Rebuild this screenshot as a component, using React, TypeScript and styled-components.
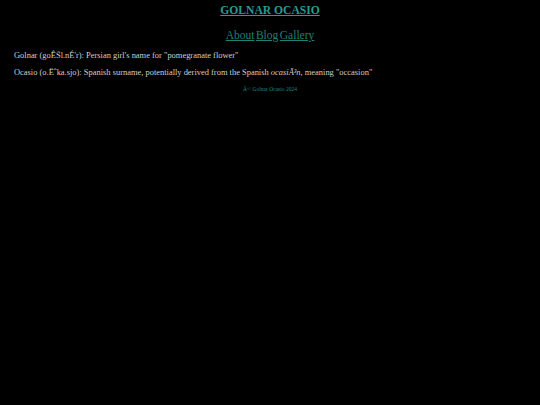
import React from 'react'
import styled, { createGlobalStyle } from 'styled-components'

const GlobalStyle = createGlobalStyle`
  html, body {
    margin: 0;
    padding: 0;
    background: #000;
    height: 100%;
  }
  body {
    font-family: "Liberation Serif", "Times New Roman", serif;
  }
`

const Page = styled.div`
  min-height: 405px;
  background: #000;
  padding: 4px 14px 0;
  box-sizing: border-box;
`

const Header = styled.header`
  display: flex;
  flex-direction: column;
  align-items: center;
`

const Title = styled.a`
  font-size: 11.6px;
  font-weight: bold;
  color: #2a9a8e;
  text-decoration: underline;
  line-height: 14px;
`

const Nav = styled.nav`
  display: flex;
  gap: 1.5px;
  margin-top: 10px;
`

const NavLink = styled.a`
  font-size: 11.5px;
  color: #1f8075;
  text-decoration: underline;
  line-height: 14px;
`

const Def = styled.p<{ $top: number }>`
  margin: 0;
  font-size: 8.45px;
  line-height: 10px;
  color: #cfcfcf;
  margin-top: ${(p) => p.$top}px;
`

const Term = styled.i`
  font-style: italic;
`

const Footer = styled.footer`
  text-align: center;
  font-size: 5.5px;
  color: #1f8a80;
  margin-top: 9px;
`

export default function App() {
  return (
    <Page>
      <GlobalStyle />
      <Header>
        <Title href="#">GOLNAR OCASIO</Title>
        <Nav>
          <NavLink href="#">About</NavLink>
          <NavLink href="#">Blog</NavLink>
          <NavLink href="#">Gallery</NavLink>
        </Nav>
      </Header>
      <Def $top={8}>Golnar (goÊŠl.nÉ'r): Persian girl's name for "pomegranate flower"</Def>
      <Def $top={7}>
        Ocasio (o.Ëˆka.sjo): Spanish surname, potentially derived from the Spanish <Term>ocasiÃ³n</Term>, meaning "occasion"
      </Def>
      <Footer>Â© Golnar Ocasio 2024</Footer>
    </Page>
  )
}
